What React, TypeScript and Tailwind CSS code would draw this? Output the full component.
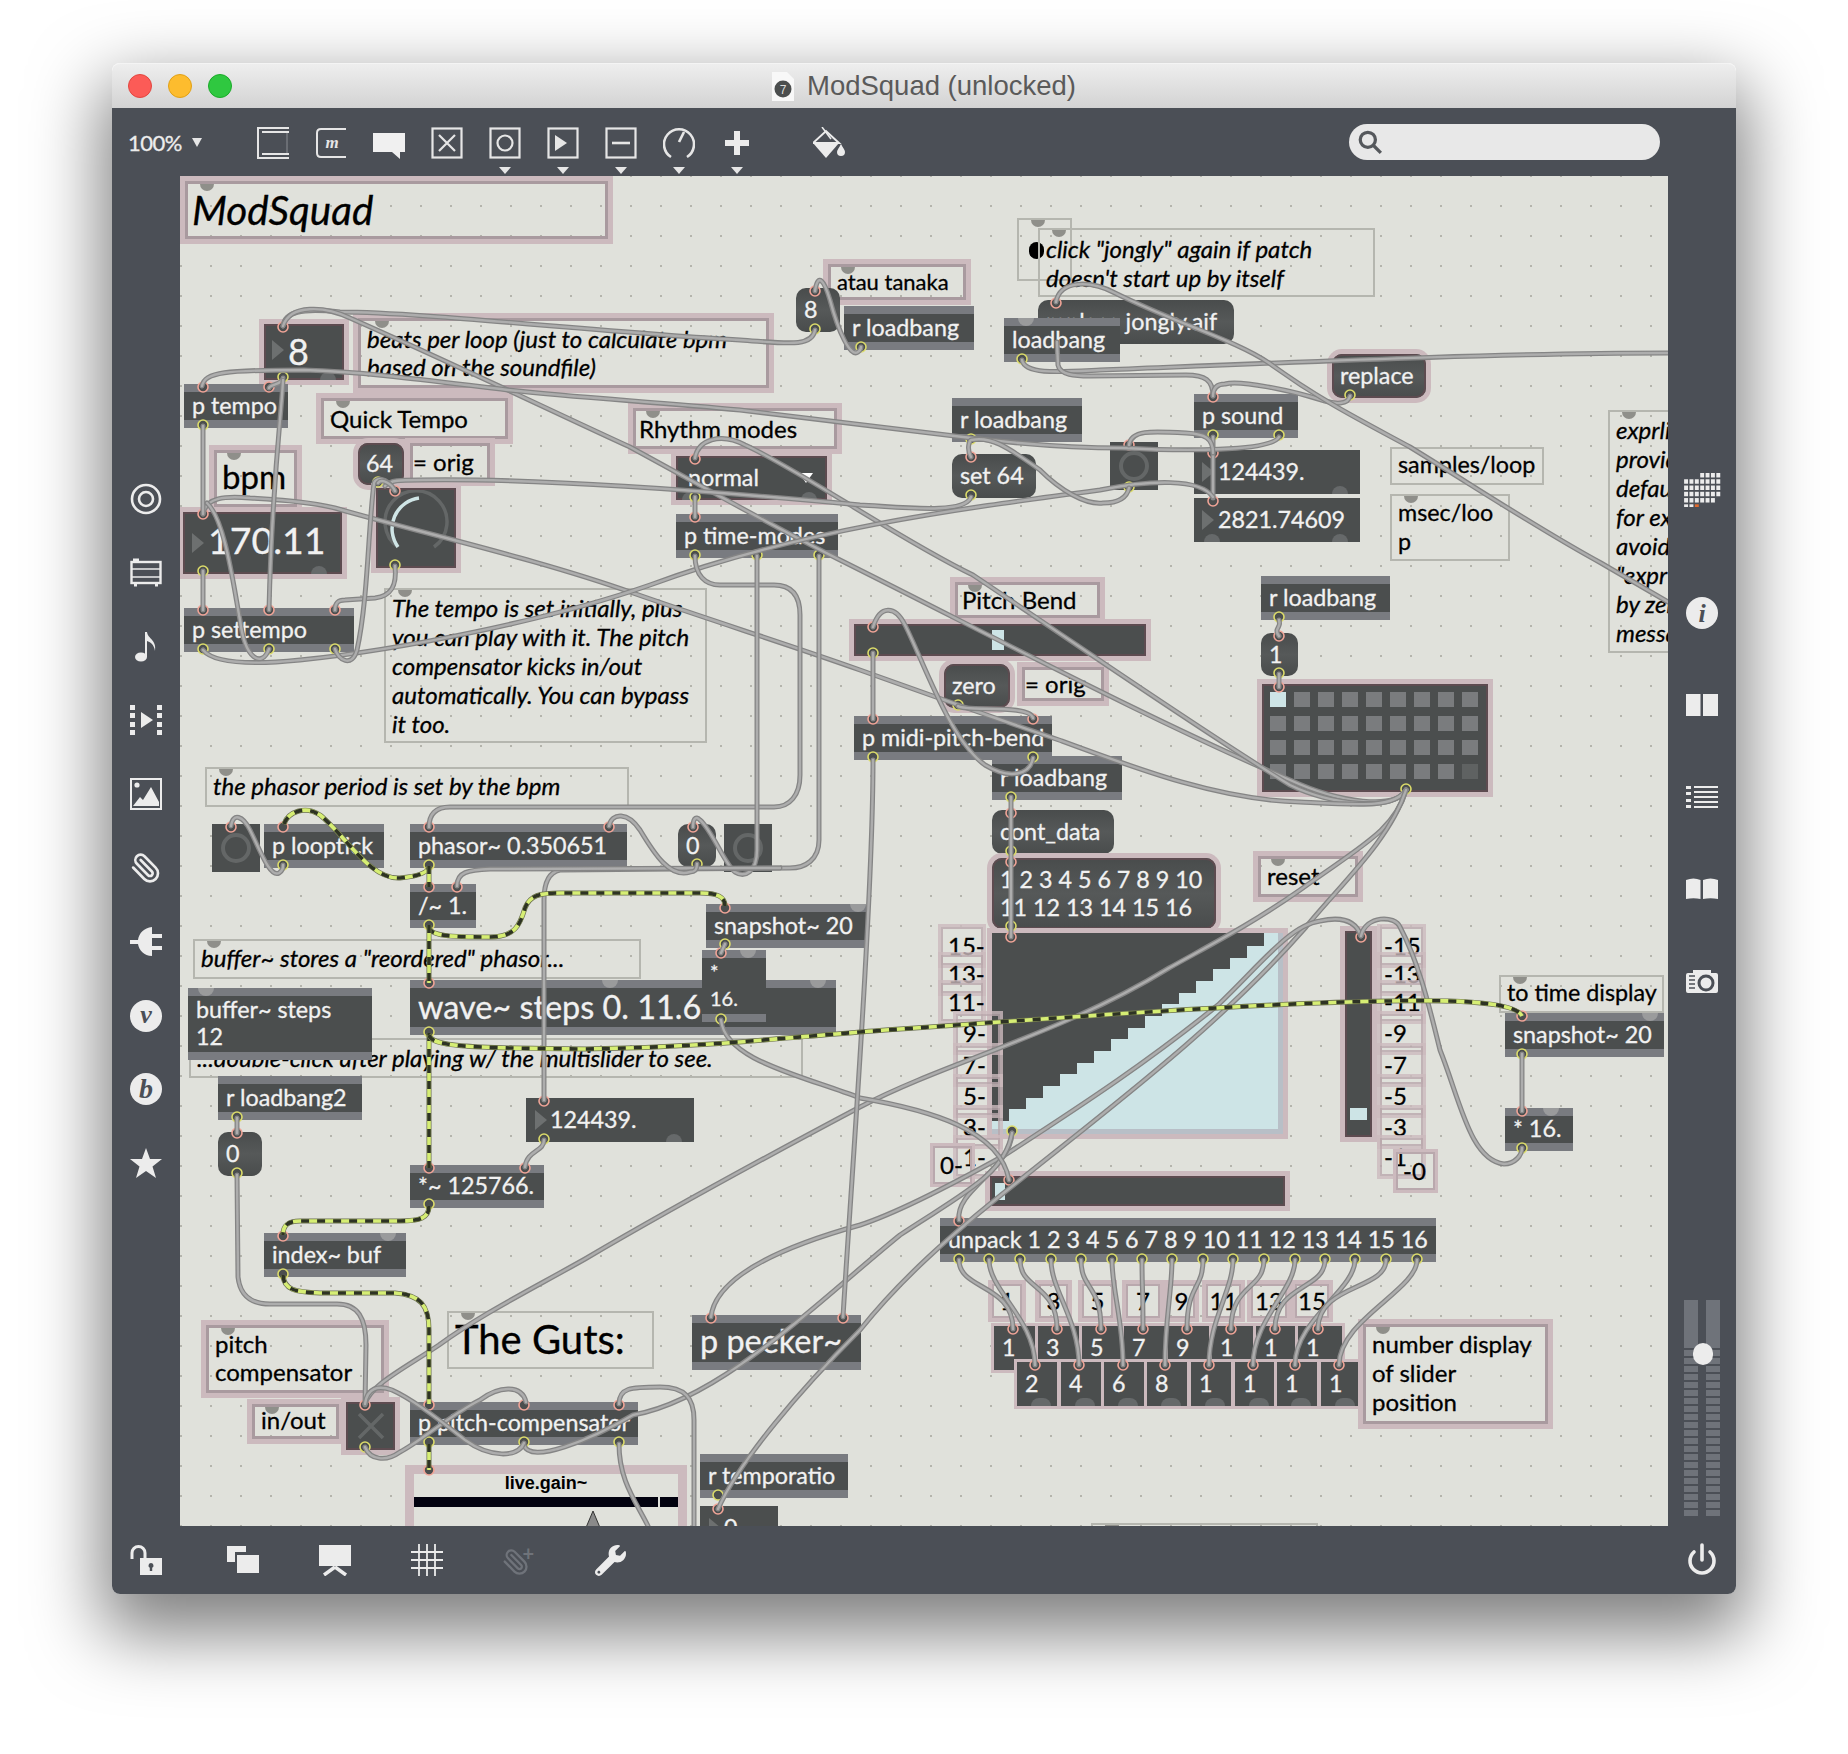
import { Paperclip } from "lucide-react";
import { FaWrench } from "react-icons/fa";
import type { ReactNode } from "react";

// patch objects
const objBox = "absolute flex items-center whitespace-pre border-y-[8px] border-[#797b80] bg-[#4b4e4e] pb-[2px] pl-[8px] text-[23.3px] leading-[27px] text-[#f1f1f1]";
const msgBox = "absolute flex items-center whitespace-pre rounded-[10px] bg-gradient-to-b from-[#494c4c] via-[#565959] to-[#494c4c] pb-[2px] pl-[8px] text-[23.3px] leading-[28px] text-[#f1f1f1]";
const numBox = "absolute flex items-center whitespace-pre bg-[#4b4e4e] pb-[2px] text-[23.3px] text-[#f1f1f1]";
const plainNote = "absolute whitespace-pre border-2 border-[#b5b6af] pl-[6px] text-[24px] leading-[29px] text-black italic";
const pinkNote = "absolute flex items-center whitespace-pre border-[3px] border-[#a99a9f] ring-[5px] ring-[#ccbabe] pl-[6px] text-[24px] leading-[28px] text-black";
const pinkRing = "ring-[5px] ring-[#ccbabe] outline-2 outline-[#5d4b50] -outline-offset-2";
const btnBox = "absolute flex items-center justify-center bg-[#4b4e4e]";

const Dot = ({ cls }: { cls: string }) => <span className={`absolute top-0 h-[7px] w-[14px] rounded-b-full bg-[#8f8f8a] ${cls}`} />;
const TopDot = ({ cls }: { cls: string }) => <span className={`absolute -top-[8px] h-[8px] w-[16px] rounded-b-full bg-[#9a9b9c] ${cls}`} />;
const LowDot = ({ cls }: { cls: string }) => <span className={`absolute bottom-0 h-[8px] w-[16px] rounded-t-full bg-[#66696a] ${cls}`} />;

const Tri = ({ cls }: { cls: string }) => (
  <span className={`absolute border-y-[10px] border-l-[12px] border-y-transparent border-l-[#6d7070] ${cls}`} />
);

const Ring = () => <span className="block h-[30px] w-[30px] rounded-full border-[4px] border-[#646767]" />;

const smallNotes = [
  { cls: "left-[812px] w-[30px]", text: "1" },
  { cls: "left-[859px] w-[29px]", text: "3" },
  { cls: "left-[902px] w-[31px]", text: "5" },
  { cls: "left-[946px] w-[34px]", text: "7" },
  { cls: "left-[988px] w-[27px]", text: "9" },
  { cls: "left-[1026px] w-[35px]", text: "11" },
  { cls: "left-[1071px] w-[36px]", text: "13" },
  { cls: "left-[1115px] w-[34px]", text: "15" },
];

const rowOne = [
  { cls: "left-[814px]", text: "1" },
  { cls: "left-[858px]", text: "3" },
  { cls: "left-[902px]", text: "5" },
  { cls: "left-[944px]", text: "7" },
  { cls: "left-[988px]", text: "9" },
  { cls: "left-[1032px]", text: "1" },
  { cls: "left-[1076px]", text: "1" },
  { cls: "left-[1118px]", text: "1" },
];

const rowTwo = [
  { cls: "left-[837px]", text: "2" },
  { cls: "left-[881px]", text: "4" },
  { cls: "left-[924px]", text: "6" },
  { cls: "left-[967px]", text: "8" },
  { cls: "left-[1011px]", text: "1" },
  { cls: "left-[1055px]", text: "1" },
  { cls: "left-[1097px]", text: "1" },
  { cls: "left-[1141px]", text: "1" },
];

const scaleLeft = [
  { cls: "left-[761px] top-[751px] w-[42px]", text: "15-" },
  { cls: "left-[761px] top-[779px] w-[42px]", text: "13-" },
  { cls: "left-[761px] top-[807px] w-[42px]", text: "11-" },
  { cls: "left-[776px] top-[838px] w-[44px]", text: "9-" },
  { cls: "left-[776px] top-[870px] w-[44px]", text: "7-" },
  { cls: "left-[776px] top-[901px] w-[44px]", text: "5-" },
  { cls: "left-[776px] top-[932px] w-[44px]", text: "3-" },
  { cls: "left-[776px] top-[962px] w-[44px]", text: "1-" },
];

const scaleRight = [
  { cls: "top-[751px]", text: "-15" },
  { cls: "top-[779px]", text: "-13" },
  { cls: "top-[807px]", text: "-11" },
  { cls: "top-[838px]", text: "-9" },
  { cls: "top-[870px]", text: "-7" },
  { cls: "top-[901px]", text: "-5" },
  { cls: "top-[932px]", text: "-3" },
  { cls: "top-[962px]", text: "-1" },
];

const unpackOuts = [959, 989, 1020, 1051, 1081, 1112, 1142, 1172, 1203, 1233, 1264, 1295, 1325, 1355, 1386, 1417];
const rowOneIns = [1013, 1057, 1101, 1143, 1187, 1231, 1275, 1318];
const rowTwoIns = [1035, 1079, 1123, 1165, 1209, 1253, 1295, 1339];
const unpackIns = unpackOuts.map((_, i) => (i % 2 === 0 ? [rowOneIns[i / 2], 1329] : [rowTwoIns[(i - 1) / 2], 1365]));

// page coordinates, the svg below has a viewBox that starts at the canvas corner
const cords = [
  "M815,330 C812,348 785,343 740,340 C600,332 420,312 340,312 C300,308 285,312 283,326",
  "M283,326 C290,304 325,306 350,318 C450,362 560,415 630,447 C700,485 770,525 840,560 C1000,640 1150,720 1290,780 C1340,803 1395,810 1406,790",
  "M695,458 C698,440 720,432 745,445 C800,470 900,540 973,575 C1100,660 1200,730 1290,785 C1330,805 1395,812 1406,790",
  "M203,514 C206,497 225,496 250,498 C290,500 320,503 342,510 C430,535 540,560 633,593 C710,620 790,645 860,670 C930,695 1000,720 1059,740 C1140,770 1220,800 1300,802 C1360,805 1395,808 1406,790",
  "M873,627 C880,605 895,605 905,625 C925,665 950,740 985,765 C1010,780 1030,775 1033,758",
  "M958,706 C965,712 1030,704 1033,718",
  "M1406,790 C1395,830 1361,846 1300,890 C1250,925 1210,945 1169,968 C1060,1035 950,1060 860,1107 C760,1160 660,1215 585,1259 C530,1290 480,1315 439,1345 C405,1368 370,1385 365,1404",
  "M1406,790 C1390,840 1340,885 1306,927 C1220,1025 1120,1100 1015,1184 C950,1235 900,1280 860,1330 C800,1390 740,1460 718,1509",
  "M711,1317 C715,1280 770,1250 860,1225 C900,1212 960,1180 1005,1155 C1090,1100 1150,1060 1218,1005 C1260,965 1290,925 1320,921 C1338,917 1355,918 1361,936",
  "M959,1220 C955,1190 1010,1170 1012,1133",
  "M1012,1133 C1005,1175 960,1195 900,1235 C820,1300 720,1400 633,1415 C590,1440 530,1465 524,1445",
  "M721,1020 C725,1060 800,1075 860,1098 C930,1110 1000,1130 1009,1180",
  "M873,760 C873,900 850,1200 843,1317",
  "M1361,936 C1366,915 1395,915 1400,927 C1420,965 1430,1010 1440,1050 C1460,1100 1470,1160 1504,1164 C1515,1164 1522,1155 1522,1148",
  "M1022,360 C1025,375 1060,372 1100,370 C1300,362 1500,353 1668,353",
  "M1057,342 L1058,365 C1060,375 1075,376 1090,376 L1186,375 C1205,375 1213,380 1213,396",
  "M1350,396 C1348,405 1335,404 1325,401 C1290,390 1240,380 1225,384 C1215,384 1213,390 1213,396",
  "M1056,302 C1060,280 1090,280 1115,293 C1180,325 1235,340 1269,363 C1320,400 1360,420 1410,447 C1480,490 1540,530 1601,563 L1668,602",
  "M1213,437 L1213,498",
  "M202,386 C205,372 225,370 304,370 C370,372 440,382 508,390 C580,398 660,402 740,410 C820,420 900,430 963,437 C1020,444 1070,448 1123,448 C1180,451 1270,452 1279,437",
  "M971,497 C965,515 900,507 860,505 C700,490 540,478 420,480 C400,480 390,480 385,486",
  "M203,650 C215,665 260,664 300,660 C400,650 550,620 650,585 C800,530 950,510 1100,490 C1150,480 1200,478 1213,497",
  "M971,457 C966,448 970,440 971,440 C990,436 1005,445 1040,470 C1060,490 1085,505 1103,503 C1120,503 1127,497 1129,488",
  "M1129,445 C1131,430 1150,431 1186,433 C1205,434 1213,438 1213,453",
  "M283,378 C282,385 270,384 269,388",
  "M283,380 C282,410 272,480 269,610",
  "M203,426 L203,514",
  "M203,571 L203,610",
  "M207,503 C225,520 233,583 240,620 C245,660 262,668 269,649",
  "M395,566 C397,585 392,596 375,598 L345,600 C337,600 335,604 335,610",
  "M335,649 C338,660 352,668 357,650 C368,600 368,530 374,483 C376,478 386,476 394,490",
  "M378,483 C382,478 392,484 395,491",
  "M695,497 L695,517",
  "M695,556 C695,575 705,585 720,585 L774,585 C792,585 800,596 800,615 L800,775 C800,795 790,807 774,807 L450,807 C435,807 429,815 429,827",
  "M757,556 L757,850 C757,872 745,878 735,872 C725,865 712,830 700,820 C695,815 693,820 693,827",
  "M819,556 L819,840 C819,860 805,868 790,868 L560,870 C550,872 544,880 544,900 L544,1100",
  "M457,886 C457,872 468,870 490,869 L780,868",
  "M609,826 C612,812 628,812 640,830 C655,855 670,878 690,872 C695,872 697,870 697,864",
  "M231,826 C233,812 243,816 250,830 C260,850 270,878 279,873 C283,870 283,868 283,865",
  "M544,1140 C544,1152 527,1150 525,1167",
  "M725,944 L721,953",
  "M237,1118 L237,1133",
  "M237,1175 L238,1277 C240,1295 250,1304 270,1304 L337,1304 C358,1304 366,1318 366,1345 L365,1405",
  "M365,1447 C370,1460 386,1462 400,1452 C420,1442 450,1415 480,1400 C500,1385 522,1385 526,1402",
  "M365,1404 C367,1388 378,1385 392,1390 C410,1398 440,1420 465,1440 C490,1458 518,1458 524,1443",
  "M619,1404 C619,1388 630,1387 660,1387 C685,1387 694,1398 694,1420 L694,1526",
  "M619,1444 C619,1480 635,1500 648,1526",
  "M815,291 C818,272 824,280 830,300 C838,330 850,358 858,352 C861,350 861,348 861,347",
  "M1279,620 C1282,628 1273,628 1279,636",
  "M1279,674 L1279,687",
  "M1011,797 L1011,937",
  "M873,653 L873,719",
  "M1522,1054 L1522,1111",
  ...unpackOuts.map((x, i) => {
    const [tx, ty] = unpackIns[i];
    return `M${x},1260 C${x},1290 ${tx},${ty - 45} ${tx},${ty}`;
  }),
];

const signals = [
  "M284,824 C288,812 305,805 320,815 C345,835 370,880 400,878 C420,876 429,872 429,866",
  "M429,866 L429,887",
  "M429,927 C430,936 450,937 490,937 C515,937 520,925 525,908 C530,895 540,893 560,893 L700,893 C718,893 725,897 725,906",
  "M429,925 L429,983",
  "M429,1033 L429,1168",
  "M429,1035 C432,1046 460,1048 585,1049 C700,1047 760,1040 860,1032 C1000,1022 1250,1003 1388,1001 C1440,1000 1515,1000 1522,1016",
  "M429,1206 C429,1218 420,1221 400,1221 L300,1221 C288,1221 283,1225 283,1235",
  "M283,1275 C284,1290 295,1292 320,1293 L395,1293 C420,1295 429,1305 429,1330 L429,1404",
  "M429,1444 L429,1470",
];

const inlets = [
  [203, 387], [269, 387], [283, 327], [203, 514], [395, 491], [203, 610], [269, 610], [335, 610], [231, 827], [283, 827],
  [429, 827], [609, 827], [693, 827], [429, 887], [457, 887], [725, 908], [429, 983], [721, 953], [237, 1133], [544, 1101],
  [429, 1168], [525, 1168], [283, 1236], [365, 1405], [429, 1405], [524, 1405], [619, 1405], [711, 1318], [843, 1318], [429, 1470],
  [718, 1509], [815, 291], [1056, 303], [1213, 397], [971, 457], [1129, 445], [1213, 453], [1213, 501], [695, 459], [695, 517],
  [873, 627], [873, 719], [1033, 719], [1011, 813], [1011, 862], [1011, 937], [1279, 636], [1279, 687], [1361, 937], [1522, 1016],
  [1522, 1111], [1009, 1180], [959, 1221], ...unpackIns,
];

const outlets = [
  [203, 425], [283, 377], [378, 482], [395, 565], [203, 649], [269, 649], [335, 649], [203, 571], [283, 865], [429, 865],
  [697, 864], [429, 925], [725, 944], [429, 1032], [721, 1019], [237, 1117], [237, 1173], [544, 1139], [429, 1204], [283, 1274],
  [365, 1447], [429, 1442], [524, 1442], [619, 1442], [718, 1495], [815, 329], [861, 347], [1022, 359], [1350, 395], [971, 439],
  [971, 495], [1129, 487], [1213, 435], [1279, 435], [695, 497], [695, 555], [757, 555], [819, 555], [873, 653], [958, 705],
  [873, 757], [1033, 757], [1011, 797], [1011, 851], [1011, 926], [1279, 617], [1279, 673], [1406, 789], [1012, 1131], [1522, 1054],
  [1522, 1148], ...unpackOuts.map((x) => [x, 1259]),
];

const PatchCords = () => (
  <svg className="pointer-events-none absolute left-0 top-0 h-[1350px] w-[1488px]" viewBox="180 176 1488 1350" fill="none">
    {inlets.map(([x, y], i) => (
      <circle key={i} cx={x} cy={y} r="5" fill="#4b4e4e" stroke="#f0a497" strokeWidth="1.6" />
    ))}
    {outlets.map(([x, y], i) => (
      <circle key={i} cx={x} cy={y} r="5" fill="#4b4e4e" stroke="#dcdc6a" strokeWidth="1.6" />
    ))}
    {cords.map((d, i) => (
      <g key={i}>
        <path d={d} stroke="#858585" strokeWidth="5" strokeLinecap="round" />
        <path d={d} stroke="#adadad" strokeWidth="2.4" strokeLinecap="round" />
      </g>
    ))}
    {signals.map((d, i) => (
      <g key={i}>
        <path d={d} stroke="#6b7050" strokeWidth="5" />
        <path d={d} stroke="#d6ee74" strokeWidth="3.6" />
        <path d={d} stroke="#2e3324" strokeWidth="3.6" strokeDasharray="8 8" />
      </g>
    ))}
  </svg>
);

const Patch = () => (
  <div className="relative h-[1350px] w-[1488px] shrink-0 overflow-hidden bg-[#e0e1db] bg-[radial-gradient(circle,#b4b4ac_1.1px,transparent_1.4px)] bg-[length:30px_30px] bg-[position:-14px_-15px] [-webkit-text-stroke:0.3px]">
    <div className={`${pinkNote} left-[5px] top-[5px] h-[58px] w-[423px] !pl-[4px] !text-[40.5px] italic`}><Dot cls="left-[12px]" />ModSquad</div>
    <div className={`${pinkNote} left-[178px] top-[142px] h-[70px] w-[411px] italic`}><Dot cls="left-[14px]" />{"beats per loop (just to calculate bpm\nbased on the soundfile)"}</div>
    <div className={`${numBox} ${pinkRing} left-[84px] top-[148px] h-[56px] w-[80px] !pl-[24px] !text-[36px]`}><Tri cls="left-[8px] top-[16px]" /><LowDot cls="left-[56px]" />8</div>
    <div className={`${objBox} left-[4px] top-[208px] h-[44px] w-[104px]`}>p tempo</div>
    <div className={`${pinkNote} left-[141px] top-[222px] h-[41px] w-[187px]`}><Dot cls="left-[12px]" />Quick Tempo</div>
    <div className={`${pinkNote} left-[453px] top-[232px] h-[41px] w-[204px] !pl-[3px]`}><Dot cls="left-[10px]" />Rhythm modes</div>
    <div className={`${pinkNote} left-[34px] top-[274px] h-[57px] w-[83px] pb-[6px] !pl-[5px] !text-[33px]`}><Dot cls="left-[10px]" />bpm</div>
    <div className={`${numBox} ${pinkRing} left-[3px] top-[336px] h-[62px] w-[159px] !pb-[5px] !pl-[25px] !text-[37.5px]`}><Tri cls="left-[9px] top-[21px]" /><LowDot cls="left-[128px]" />170.11</div>
    <div className={`${msgBox} ${pinkRing} left-[178px] top-[267px] h-[42px] w-[46px]`}>64</div>
    <div className={`${pinkNote} left-[230px] top-[267px] h-[38px] w-[80px] !pl-[0px]`}>= orig</div>
    <div className={`${btnBox} ${pinkRing} left-[196px] top-[312px] h-[80px] w-[80px]`}>
      <svg width="80" height="80" viewBox="0 0 80 80" fill="none" strokeWidth="3.5">
        <path d="M22,59 A31,31 0 1 1 58,59" stroke="#646767" />
        <path d="M22,59 A31,31 0 0 1 43,10" stroke="#cfe5e6" />
      </svg>
    </div>
    <div className={`${objBox} left-[4px] top-[432px] h-[44px] w-[170px]`}>p settempo</div>
    <div className={`${plainNote} left-[204px] top-[412px] h-[155px] w-[323px] pt-[3px]`}><Dot cls="left-[12px]" />{"The tempo is set initially, plus\nyou can play with it. The pitch\ncompensator kicks in/out\nautomatically. You can bypass\nit too."}</div>
    <div className={`${plainNote} left-[25px] top-[591px] h-[40px] w-[424px] pt-[2px]`}><Dot cls="left-[12px]" />the phasor period is set by the bpm</div>
    <div className={`${btnBox} left-[32px] top-[648px] h-[48px] w-[48px]`}><Ring /></div>
    <div className={`${objBox} left-[84px] top-[648px] h-[44px] w-[120px]`}>p looptick</div>
    <div className={`${objBox} left-[230px] top-[648px] h-[44px] w-[217px]`}>phasor~ 0.350651</div>
    <div className={`${msgBox} left-[498px] top-[648px] h-[43px] w-[38px]`}>0</div>
    <div className={`${btnBox} left-[544px] top-[648px] h-[48px] w-[48px]`}><Ring /></div>
    <div className={`${objBox} left-[230px] top-[708px] h-[44px] w-[66px]`}>/~ 1.</div>
    <div className={`${objBox} left-[526px] top-[728px] h-[44px] w-[160px]`}><TopDot cls="right-[0px]" />snapshot~ 20</div>
    <div className={`${plainNote} left-[13px] top-[763px] h-[40px] w-[448px] pt-[2px]`}><Dot cls="left-[12px]" />buffer~ stores a "reordered" phasor...</div>
    <div className={`${plainNote} left-[9px] top-[862px] h-[40px] w-[614px] pt-[3px]`}>...double-click after playing w/ the multislider to see.</div>
    <div className={`${objBox} left-[230px] top-[804px] h-[55px] w-[426px] !text-[32.4px]`}><TopDot cls="left-[192px]" /><TopDot cls="right-[10px]" />wave~ steps 0. 11.6</div>
    <div className={`${objBox} left-[522px] top-[774px] h-[72px] w-[64px] !text-[20px]`}><TopDot cls="right-[10px]" />{"*\n16."}</div>
    <div className={`${objBox} left-[8px] top-[812px] h-[72px] w-[184px]`}><TopDot cls="left-[10px]" />{"buffer~ steps\n12"}</div>
    <div className={`${objBox} left-[38px] top-[900px] h-[44px] w-[144px]`}>r loadbang2</div>
    <div className={`${msgBox} left-[38px] top-[956px] h-[44px] w-[44px]`}>0</div>
    <div className={`${numBox} left-[346px] top-[922px] h-[44px] w-[168px] pl-[24px]`}><Tri cls="left-[9px] top-[12px]" /><LowDot cls="right-[12px]" />124439.</div>
    <div className={`${objBox} left-[230px] top-[989px] h-[43px] w-[134px]`}>*~ 125766.</div>
    <div className={`${objBox} left-[84px] top-[1057px] h-[44px] w-[142px]`}><TopDot cls="right-[10px]" />index~ buf</div>
    <div className={`${pinkNote} left-[26px] top-[1149px] h-[68px] w-[178px] pb-[2px]`}><Dot cls="left-[12px]" />{"pitch\ncompensator"}</div>
    <div className={`${pinkNote} left-[72px] top-[1228px] h-[35px] w-[87px] pb-[4px]`}><Dot cls="left-[10px]" />in/out</div>
    <div className={`${btnBox} ${pinkRing} left-[166px] top-[1226px] h-[48px] w-[49px]`}>
      <svg width="30" height="30" viewBox="0 0 30 30" stroke="#646767" strokeWidth="3.5"><path d="M3,3 L27,27 M27,3 L3,27" /></svg>
    </div>
    <div className={`${plainNote} left-[267px] top-[1135px] h-[58px] w-[207px] !text-[40px] !leading-[52px] not-italic`}><Dot cls="left-[12px]" />The Guts:</div>
    <div className={`${objBox} left-[512px] top-[1139px] h-[55px] w-[169px] !pb-[5px] !text-[32.4px]`}>p peeker~</div>
    <div className={`${objBox} left-[230px] top-[1226px] h-[43px] w-[228px]`}>p pitch-compensator</div>
    <div className="absolute left-[225px] top-[1289px] flex h-[90px] w-[282px] flex-col items-center border-[9px] border-[#ccbabe] bg-[#e0e1db] [-webkit-text-stroke:0px] [font-family:'Liberation_Sans',sans-serif]">
      <span className="text-[18px] font-bold leading-[18px] text-black">live.gain~</span>
      <div className="mt-[5px] flex h-[10px] w-full gap-[2px]">
        <span className="h-full flex-1 bg-[#02020f]" />
        <span className="h-full w-[18px] bg-[#02020f]" />
      </div>
      <svg className="ml-[94px] mt-[3px]" width="18" height="20" viewBox="0 0 18 20"><path d="M9,1 L17,20 L1,20 Z" fill="#8a8a8a" stroke="#333" /></svg>
    </div>
    <div className={`${objBox} left-[520px] top-[1278px] h-[44px] w-[148px]`}>r temporatio</div>
    <div className={`${numBox} left-[520px] top-[1330px] h-[44px] w-[78px] pl-[24px]`}><Tri cls="left-[9px] top-[12px]" />0</div>

    <div className={`${pinkNote} left-[648px] top-[88px] h-[36px] w-[138px] !text-[22px]`}><Dot cls="left-[10px]" />atau tanaka</div>
    <div className={`${msgBox} left-[616px] top-[112px] h-[44px] w-[44px]`}>8</div>
    <div className={`${objBox} left-[664px] top-[130px] h-[44px] w-[130px]`}>r loadbang</div>
    <div className={`${msgBox} left-[858px] top-[124px] h-[44px] w-[196px]`}>replace jongly.aif</div>
    <div className={`${objBox} left-[824px] top-[142px] h-[44px] w-[116px]`}><TopDot cls="left-[14px]" />loadbang</div>
    <div className="absolute left-[837px] top-[42px] h-[63px] w-[55px] border-2 border-[#b5b6af]"><Dot cls="left-[12px]" /><span className="absolute left-[10px] top-[22px] h-[17px] w-[15px] rounded-full bg-black" /></div>
    <div className={`${plainNote} left-[858px] top-[52px] h-[69px] w-[337px] pt-[4px]`}><Dot cls="left-[12px]" />{"click \"jongly\" again if patch\ndoesn't start up by itself"}</div>
    <div className={`${msgBox} ${pinkRing} left-[1152px] top-[178px] h-[44px] w-[94px]`}>replace</div>
    <div className={`${objBox} left-[772px] top-[222px] h-[44px] w-[130px]`}>r loadbang</div>
    <div className={`${msgBox} left-[772px] top-[278px] h-[44px] w-[84px]`}>set 64</div>
    <div className={`${btnBox} left-[930px] top-[266px] h-[48px] w-[48px]`}><Ring /></div>
    <div className={`${objBox} left-[1014px] top-[218px] h-[44px] w-[104px]`}>p sound</div>
    <div className={`${numBox} left-[1014px] top-[274px] h-[44px] w-[166px] pl-[24px]`}><Tri cls="left-[8px] top-[12px]" /><LowDot cls="right-[12px]" />124439.</div>
    <div className={`${numBox} left-[1014px] top-[322px] h-[44px] w-[166px] pl-[24px]`}><Tri cls="left-[8px] top-[12px]" /><LowDot cls="left-[10px]" /><LowDot cls="right-[12px]" />2821.74609</div>
    <div className={`${plainNote} left-[1210px] top-[271px] h-[38px] w-[154px] pt-[1px] !text-[23.3px] not-italic`}>samples/loop</div>
    <div className={`${plainNote} left-[1210px] top-[318px] h-[67px] w-[120px] pt-[2px] !text-[23.3px] not-italic`}><Dot cls="left-[12px]" />{"msec/loo\np"}</div>
    <div className={`${plainNote} left-[1428px] top-[234px] h-[243px] w-[100px] pt-[3px]`}><Dot cls="left-[12px]" />{"exprline\nprovides\ndefault\nfor example\navoid\n\"expr\nby zero\nmessage"}</div>
    <div className={`${objBox} ${pinkRing} !border-0 left-[496px] top-[280px] h-[44px] w-[151px] !pl-[12px]`}>
      <LowDot cls="left-[6px]" />
      <LowDot cls="right-[10px]" />
      normal
      <span className="absolute right-[14px] top-[17px] border-x-[7px] border-t-[10px] border-x-transparent border-t-white" />
    </div>
    <div className={`${objBox} left-[496px] top-[338px] h-[44px] w-[162px]`}>p time-modes</div>

    <div className={`${pinkNote} left-[775px] top-[406px] h-[36px] w-[145px] !pl-[4px]`}><Dot cls="left-[10px]" />Pitch Bend</div>
    <div className={`${btnBox} ${pinkRing} left-[674px] top-[448px] h-[32px] w-[292px]`}>
      <span className="ml-[-4px] h-[20px] w-[12px] bg-[#cde4e6]" />
    </div>
    <div className={`${msgBox} ${pinkRing} left-[764px] top-[488px] h-[44px] w-[66px]`}>zero</div>
    <div className={`${pinkNote} left-[842px] top-[491px] h-[34px] w-[82px] !pl-[0px]`}>= orig</div>
    <div className={`${objBox} left-[674px] top-[540px] h-[44px] w-[198px]`}>p midi-pitch-bend</div>
    <div className={`${objBox} left-[812px] top-[580px] h-[44px] w-[130px]`}>r loadbang</div>
    <div className={`${msgBox} left-[812px] top-[634px] h-[44px] w-[122px]`}>cont_data</div>
    <div className={`${msgBox} ${pinkRing} left-[812px] top-[682px] h-[71px] w-[224px]`}>{"1 2 3 4 5 6 7 8 9 10\n11 12 13 14 15 16"}</div>
    <div className={`${pinkNote} left-[1078px] top-[680px] h-[41px] w-[100px] pb-[2px]`}><Dot cls="left-[10px]" />reset</div>
    <div className={`${objBox} left-[1081px] top-[400px] h-[44px] w-[129px]`}>r loadbang</div>
    <div className={`${msgBox} left-[1081px] top-[457px] h-[43px] w-[37px]`}>1</div>
    <div className={`absolute left-[1082px] top-[508px] grid h-[108px] w-[226px] grid-cols-[repeat(9,16px)] content-start gap-x-[8px] gap-y-[9px] bg-[#4b4e4e] pl-[8px] pt-[8px] ${pinkRing}`}>
      {Array.from({ length: 36 }).map((_, i) => (
        <span key={i} className={`h-[15px] ${i === 0 ? "bg-[#cde4e6]" : i === 35 ? "bg-[#5f6262]" : "bg-[#7a7c7e]"}`} />
      ))}
    </div>
    <div className="absolute left-[812px] top-[757px] flex h-[201px] w-[291px] items-start border-b-[5px] border-r-[5px] border-[#b8bfc7] bg-[#cde4e6] ring-[5px] ring-[#ccbabe]">
      {Array.from({ length: 16 }).map((_, i) => (
        <span key={i} className="w-[17px] bg-[#4b4e4e]" style={{ height: 188 - i * 11.67 }} />
      ))}
    </div>
    {scaleLeft.map((n) => (
      <div key={n.text} className={`absolute h-[38px] whitespace-pre border-2 border-[#b9a8ad]/80 ring-[3px] ring-[#ccbabe]/80 pl-[5px] text-[24px] leading-[34px] text-black ${n.cls}`}>{n.text}</div>
    ))}
    <div className="absolute left-[753px] top-[970px] h-[38px] w-[39px] whitespace-pre border-2 border-[#b9a8ad] ring-[3px] ring-[#ccbabe] pl-[5px] text-[24px] leading-[34px] text-black">0-</div>
    <div className={`${btnBox} ${pinkRing} left-[1165px] top-[755px] h-[206px] w-[27px] items-end pb-[17px]`}>
      <span className="h-[12px] w-[17px] bg-[#cde4e6]" />
    </div>
    {scaleRight.map((n) => (
      <div key={n.text} className={`absolute left-[1200px] h-[38px] w-[43px] whitespace-pre border-2 border-[#b9a8ad]/80 ring-[3px] ring-[#ccbabe]/80 pl-[2px] text-[24px] leading-[34px] text-black ${n.cls}`}>{n.text}</div>
    ))}
    <div className="absolute left-[1216px] top-[976px] h-[38px] w-[39px] whitespace-pre border-2 border-[#b9a8ad] ring-[3px] ring-[#ccbabe] pl-[5px] text-[24px] leading-[34px] text-black">-0</div>
    <div className={`${plainNote} left-[1319px] top-[799px] h-[38px] w-[165px] pt-[1px] !text-[23.3px] not-italic`}><Dot cls="left-[12px]" />to time display</div>
    <div className={`${objBox} left-[1325px] top-[837px] h-[44px] w-[159px]`}><TopDot cls="right-[6px]" />snapshot~ 20</div>
    <div className={`${objBox} left-[1325px] top-[932px] h-[43px] w-[68px]`}><TopDot cls="right-[14px]" />* 16.</div>
    <div className={`${btnBox} ${pinkRing} left-[810px] top-[1000px] h-[30px] w-[295px] !justify-start pl-[5px]`}>
      <span className="h-[17px] w-[10px] bg-[#cde4e6]" />
    </div>
    <div className={`${objBox} left-[760px] top-[1042px] h-[44px] w-[496px]`}>unpack 1 2 3 4 5 6 7 8 9 10 11 12 13 14 15 16</div>
    {smallNotes.map((n) => (
      <div key={n.cls} className={`absolute top-[1108px] flex h-[34px] items-center justify-center border-2 border-[#b9a8ad] ring-[4px] ring-[#ccbabe] text-[24px] text-black ${n.cls}`}>{n.text}</div>
    ))}
    {rowOne.map((n) => (
      <div key={n.cls} className={`${numBox} top-[1150px] h-[44px] w-[44px] pl-[8px] ring-[3px] ring-[#ccbabe] ${n.cls}`}>{n.text}</div>
    ))}
    {rowTwo.map((n) => (
      <div key={n.cls} className={`${numBox} top-[1186px] h-[44px] w-[40px] pl-[8px] ring-[3px] ring-[#ccbabe] ${n.cls}`}><LowDot cls="left-[14px] !w-[20px]" />{n.text}</div>
    ))}
    <div className={`${pinkNote} left-[1183px] top-[1148px] h-[100px] w-[185px] pb-[3px] !leading-[29px]`}><Dot cls="left-[10px]" />{"number display\nof slider\nposition"}</div>
    <div className={`${plainNote} left-[911px] top-[1347px] h-[40px] w-[227px]`}><Dot cls="left-[12px]" /></div>
    <PatchCords />
  </div>
);

// toolbar and side panel icons
const Box = ({ children }: { children: ReactNode }) => (
  <svg width="32" height="32" viewBox="0 0 32 32" fill="none" stroke="#e6e6e6" strokeWidth="2.2">
    <rect x="1.5" y="1.5" width="29" height="29" />
    {children}
  </svg>
);

const Caret = () => <span className="block border-x-[6px] border-t-[7px] border-x-transparent border-t-[#e6e6e6]" />;

const Tool = ({ children, caret = false }: { children: ReactNode; caret?: boolean }) => (
  <div className="flex w-[32px] flex-col items-center gap-[8px]">
    {children}
    {caret && <Caret />}
  </div>
);

const Toolbar = () => (
  <div className="flex h-[68px] shrink-0 items-start gap-[26px] bg-[#4b4f56] pt-[19px]">
    <div className="-mr-[26px] flex h-[30px] w-[145px] items-center gap-[10px] pl-[16px] text-[22px] tracking-[-0.5px] text-[#ececec] [-webkit-text-stroke:0.3px]">
      100%
      <span className="block border-x-[5px] border-t-[9px] border-x-transparent border-t-[#e6e6e6]" />
    </div>
    <Tool>
      <svg width="32" height="32" viewBox="0 0 32 32" fill="none" stroke="#e6e6e6" strokeWidth="2">
        <path d="M1,0 V32 M1,1 H32 M5,5 H32 M5,27 H32 M1,31 H32" />
        <path d="M30,6 V26" stroke="#8a8d92" strokeWidth="1" />
      </svg>
    </Tool>
    <Tool>
      <svg width="32" height="32" viewBox="0 0 32 32" fill="none">
        <path d="M31,2 H6 Q2,2 2,6 V26 Q2,30 6,30 H31" stroke="#e6e6e6" strokeWidth="2" />
        <text x="17" y="21" textAnchor="middle" fill="#e6e6e6" fontSize="17" fontStyle="italic" fontWeight="700" fontFamily="'Liberation Serif', serif">m</text>
      </svg>
    </Tool>
    <Tool>
      <svg width="32" height="32" viewBox="0 0 32 32"><path d="M0,6 H32 V25 H27 V32 L19,25 H0 Z" fill="#f0f0f0" /></svg>
    </Tool>
    <Tool><Box><path d="M8,8 L24,24 M24,8 L8,24" /></Box></Tool>
    <Tool caret><Box><circle cx="16" cy="16" r="7.5" /></Box></Tool>
    <Tool caret><Box><path d="M8,8 L20,16 L8,24 Z" fill="#e6e6e6" stroke="none" /></Box></Tool>
    <Tool caret><Box><path d="M7,16 H25" strokeWidth="2.6" /></Box></Tool>
    <Tool caret>
      <svg width="32" height="32" viewBox="0 0 32 32" fill="none" stroke="#e6e6e6" strokeWidth="2.6">
        <path d="M8,30 A15,15 0 1 1 24,30" />
        <path d="M16,15 L21,5" />
      </svg>
    </Tool>
    <Tool caret>
      <svg width="32" height="32" viewBox="0 0 32 32"><path d="M13,4 H19 V13 H28 V19 H19 V28 H13 V19 H4 V13 H13 Z" fill="#ececec" /></svg>
    </Tool>
    <div className="ml-[34px] w-[32px]">
      <svg width="32" height="32" viewBox="0 0 32 32" fill="none">
        <path d="M0,16 L13,4 L26,16 Z" stroke="#ececec" strokeWidth="2" />
        <path d="M0,16 H26 L13,31 Z" fill="#ececec" />
        <path d="M9,0 L18,12" stroke="#ececec" strokeWidth="1.5" />
        <path d="M28,17 C30,21 32,23 32,25 A4,4 0 0 1 24,25 C24,23 26,21 28,17 Z" fill="#ececec" />
      </svg>
    </div>
    <div className="ml-auto mr-[76px] mt-[-3px] flex h-[36px] w-[311px] items-center rounded-full bg-[#e8e8e8] pl-[8px]">
      <svg width="26" height="26" viewBox="0 0 24 24" fill="none" stroke="#55585c" strokeWidth="3">
        <circle cx="10" cy="10" r="7" />
        <path d="M15,15 L22,22" />
      </svg>
    </div>
  </div>
);

const LeftPanel = () => (
  <div className="flex w-[68px] shrink-0 flex-col items-center gap-[41.8px] bg-[#4b4f56] pt-[307px]">
    <svg width="32" height="32" viewBox="0 0 32 32" fill="none" stroke="#ececec" strokeWidth="2.6">
      <circle cx="16" cy="16" r="14" />
      <circle cx="16" cy="16" r="7" />
    </svg>
    <svg width="32" height="32" viewBox="0 0 32 32" fill="none" stroke="#ececec" strokeWidth="2.4">
      <rect x="1.5" y="5" width="29" height="21" />
      <path d="M1.5,12 H30.5 M1.5,20 H30.5" strokeWidth="1.5" />
      <path d="M3,3 H9 M4,28 H7 M25,28 H28" strokeWidth="3" />
    </svg>
    <svg width="32" height="32" viewBox="0 0 32 32" fill="#ececec">
      <ellipse cx="11" cy="26" rx="6" ry="4.5" />
      <path d="M15,26 V1 H17 C18,8 27,9 25,20 C24,13 20,11 17,10 V26 Z" />
    </svg>
    <svg width="32" height="32" viewBox="0 0 32 32" fill="#ececec">
      <path d="M0,1 H5 V6 H0 Z M0,9 H5 V14 H0 Z M0,18 H5 V23 H0 Z M0,26 H5 V31 H0 Z M27,1 H32 V6 H27 Z M27,9 H32 V14 H27 Z M27,18 H32 V23 H27 Z M27,26 H32 V31 H27 Z" />
      <path d="M11,8 L23,16 L11,24 Z" />
    </svg>
    <svg width="32" height="32" viewBox="0 0 32 32">
      <rect x="1" y="1" width="30" height="30" fill="none" stroke="#ececec" strokeWidth="2" />
      <circle cx="7" cy="7" r="2.6" fill="#ececec" />
      <path d="M3,28 L10,19 L13,22 L21,9 L29,24 V28 Z" fill="#ececec" />
    </svg>
    <Paperclip size={32} strokeWidth={2} className="-scale-x-100 text-[#ececec]" />
    <svg width="32" height="32" viewBox="0 0 32 32" fill="#ececec">
      <path d="M0,14 H8 C9,7 14,2 22,1 V30 C14,30 9,24 8,18 H0 Z" />
      <path d="M22,8 H32 V12 H22 Z M22,20 H32 V24 H22 Z" />
    </svg>
    <svg width="32" height="32" viewBox="0 0 32 32">
      <circle cx="16" cy="16" r="16" fill="#ececec" />
      <text x="16" y="23" textAnchor="middle" fontSize="26" fontWeight="700" fontStyle="italic" fill="#4b4f56" fontFamily="'Liberation Serif', serif">v</text>
    </svg>
    <svg width="32" height="32" viewBox="0 0 32 32">
      <circle cx="16" cy="16" r="16" fill="#ececec" />
      <text x="16" y="25" textAnchor="middle" fontSize="28" fontWeight="700" fontStyle="italic" fill="#4b4f56" fontFamily="'Liberation Serif', serif">b</text>
    </svg>
    <svg width="32" height="32" viewBox="0 0 32 32" fill="#ececec"><path d="M16,1 L20,12 H32 L22.5,19.5 L26,31 L16,24 L6,31 L9.5,19.5 L0,12 H12 Z" /></svg>
  </div>
);

const RightPanel = () => (
  <div className="flex w-[68px] shrink-0 flex-col items-center gap-[60px] bg-[#4b4f56] pb-[10px] pt-[297px]">
    <svg width="42" height="34" viewBox="0 0 40 38" fill="#ececec">
      {[0, 6, 12, 18, 24, 30, 36].map((x, c) =>
        [0, 1, 2, 3, 4].map((r) => {
          const y = c < 3 ? 7 + r * 7 : r * 7;
          if (c === 6 && r > 3) return null;
          return <rect key={`${c}-${r}`} x={x} y={y} width="4.4" height="5" fill={c === 2 && r === 4 ? "#e06a2c" : "#ececec"} />;
        }),
      )}
    </svg>
    <svg className="mt-[30px]" width="32" height="32" viewBox="0 0 32 32">
      <circle cx="16" cy="16" r="16" fill="#ececec" />
      <text x="16" y="25" textAnchor="middle" fontSize="26" fontWeight="700" fontStyle="italic" fill="#4b4f56" fontFamily="'Liberation Serif', serif">i</text>
    </svg>
    <svg width="32" height="32" viewBox="0 0 32 32" fill="#ececec"><path d="M0,5 H14.5 V27 H0 Z M17,5 H32 V27 H17 Z" /></svg>
    <svg width="32" height="32" viewBox="0 0 32 32" fill="#ececec">
      <path d="M0,5 H5 V8 H0 Z M0,11 H5 V14 H0 Z M0,18 H5 V21 H0 Z M0,24 H5 V27 H0 Z M8,5 H32 V7 H8 Z M8,10 H32 V12 H8 Z M8,15 H32 V17 H8 Z M8,20 H32 V22 H8 Z M8,25 H32 V27 H8 Z" />
    </svg>
    <svg width="32" height="32" viewBox="0 0 32 32" fill="#ececec"><path d="M0,7 C5,5 10,5 14.5,7 V26 C10,25 5,25 0,26 Z M17,7 C22,5 27,5 32,7 V26 C27,25 22,25 17,26 Z" /></svg>
    <svg width="32" height="32" viewBox="0 0 32 32">
      <path d="M2,8 H7 V5 H25 V8 H30 Q32,8 32,10 V26 Q32,28 30,28 H2 Q0,28 0,26 V10 Q0,8 2,8 Z" fill="#ececec" />
      <circle cx="20" cy="18" r="7" fill="none" stroke="#4b4f56" strokeWidth="3" />
      <path d="M3,11 H9 M3,15 H9 M3,19 H9 M3,23 H9" stroke="#4b4f56" strokeWidth="1.6" />
    </svg>
    <div className="relative mt-auto flex h-[216px] w-[36px] gap-[8px]">
      {[0, 1].map((c) => (
        <div key={c} className="flex w-[14px] flex-col gap-[2px]">
          <span className="h-[48px] bg-[#6f737a]" />
          {Array.from({ length: 21 }).map((_, i) => (
            <span key={i} className="h-[6px] bg-[#6f737a]" />
          ))}
        </div>
      ))}
      <span className="absolute left-[9px] top-[43px] h-[22px] w-[20px] rounded-full bg-[#ececec]" />
    </div>
  </div>
);

const BottomBar = () => (
  <div className="flex h-[68px] shrink-0 items-center rounded-b-lg bg-[#4b4f56] pl-[18px] pr-[18px]">
    <svg width="32" height="32" viewBox="0 0 32 32" fill="#ececec">
      <path d="M2,15 V9 A6.5,6.5 0 0 1 15,9 V14" fill="none" stroke="#ececec" strokeWidth="3" />
      <path d="M10,14 H32 V31 H10 Z M21,19 a2.5,2.5 0 0 0 -1.2,4.7 V27 H22.2 V23.7 A2.5,2.5 0 0 0 21,19 Z" fillRule="evenodd" />
    </svg>
    <svg className="ml-[65px]" width="32" height="32" viewBox="0 0 32 32" fill="#ececec">
      <path d="M0,2 H19 V8 H8 V18 H0 Z" />
      <path d="M10,11 H32 V29 H10 Z" />
    </svg>
    <svg className="ml-[60px]" width="32" height="32" viewBox="0 0 32 32" fill="#ececec">
      <path d="M0,1 H32 V22 H0 Z" />
      <path d="M16,23 L5,31 M16,23 L27,31" stroke="#ececec" strokeWidth="3.5" />
    </svg>
    <svg className="ml-[60px]" width="32" height="32" viewBox="0 0 32 32" fill="none" stroke="#ececec" strokeWidth="1.8">
      <path d="M8,0 V32 M16,0 V32 M24,0 V32 M0,8 H32 M0,16 H32 M0,24 H32" />
    </svg>
    <div className="relative ml-[59px] h-[32px] w-[32px]">
      <Paperclip size={28} strokeWidth={2} className="absolute bottom-0 left-0 -scale-x-100 text-[#6f737a]" />
      <span className="absolute right-0 top-0 text-[20px] font-bold leading-[18px] text-[#6f737a]">+</span>
    </div>
    <FaWrench size={31} className="ml-[61px] text-[#ececec]" />
    <svg className="ml-auto" width="32" height="36" viewBox="0 0 32 36" fill="none" stroke="#ececec" strokeWidth="3.6" strokeLinecap="round">
      <path d="M16,3 V18" />
      <path d="M8,10 A12,12 0 1 0 24,10" />
    </svg>
  </div>
);

const TitleBar = () => (
  <div className="grid h-[45px] shrink-0 grid-cols-[1fr_auto_1fr] items-center rounded-t-lg border-t border-[#f4f4f4] bg-gradient-to-b from-[#eeeeee] to-[#d3d3d3] [font-family:'Liberation_Sans',sans-serif]">
    <div className="flex gap-[16px] pl-[16px]">
      <span className="h-[24px] w-[24px] rounded-full border border-[#e2463f] bg-[#fc5b57]" />
      <span className="h-[24px] w-[24px] rounded-full border border-[#e1a116] bg-[#fdbc2e]" />
      <span className="h-[24px] w-[24px] rounded-full border border-[#1aab29] bg-[#2fc840]" />
    </div>
    <div className="flex items-center gap-[13px] text-[27.5px] text-[#5a5a5a]">
      <svg width="22" height="29" viewBox="0 0 22 29">
        <path d="M0,0 H15 L22,7 V29 H0 Z" fill="#f8f8f8" />
        <circle cx="11" cy="17" r="8.5" fill="#4b4e4e" />
        <text x="11" y="22" textAnchor="middle" fontSize="12" fill="#ddd">7</text>
      </svg>
      ModSquad (unlocked)
    </div>
    <div />
  </div>
);

export default function App() {
  return (
    <div className="h-[1754px] w-[1848px] overflow-hidden bg-white pl-[112px] pt-[63px] [font-family:Lato,sans-serif]">
      <div className="flex h-[1531px] w-[1624px] flex-col rounded-lg shadow-[0_30px_70px_10px_rgba(0,0,0,0.5)]">
        <TitleBar />
        <Toolbar />
        <div className="flex h-[1350px] shrink-0">
          <LeftPanel />
          <Patch />
          <RightPanel />
        </div>
        <BottomBar />
      </div>
    </div>
  );
}
